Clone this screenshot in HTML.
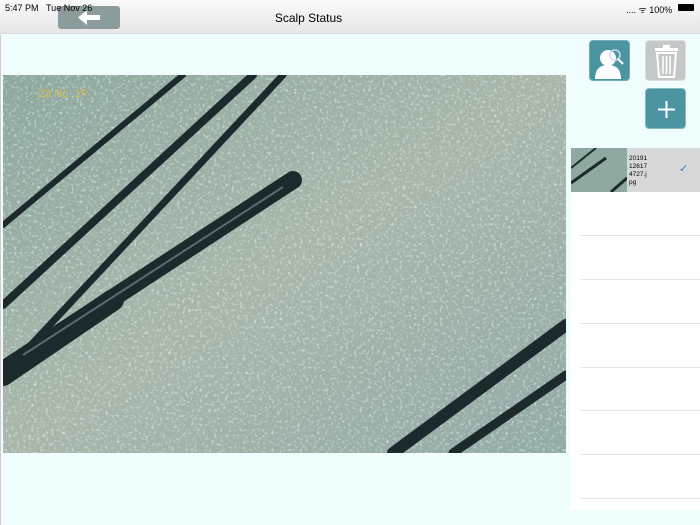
<!DOCTYPE html>
<html><head><style>
*{margin:0;padding:0;box-sizing:border-box}
body{width:700px;height:525px;overflow:hidden;background:#f0fdfd;font-family:"Liberation Sans",sans-serif;position:relative}
.bar{position:absolute;left:0;top:0;width:700px;height:34px;background:linear-gradient(#fafafa,#e6e6e6);border-bottom:1px solid #d8d8d8}
.t{position:absolute;font-size:9px;color:#000;top:3px;z-index:5}
.title{position:absolute;top:11px;left:0;width:617px;text-align:center;font-size:12px}
.back{position:absolute;left:58px;top:6px;width:62px;height:23px;background:#8c9c9c;border-radius:3px}
.btn{position:absolute;width:41px;height:41px;border-radius:4px}
.list{position:absolute;left:571px;top:148px;width:129px;height:362px;background:#fff}
.sep{position:absolute;left:10px;right:0;height:1px;background:#e4e4e4}
</style></head><body>
<div class="bar"></div>
<div class="back"><svg width="62" height="23"><path d="M20 11.5 L29 4 V9 H42 V14 H29 V19 Z" fill="#fff"/></svg></div>
<div class="t" style="left:5px">5:47 PM&nbsp;&nbsp;&nbsp;Tue Nov 26</div>
<div class="t" style="left:626px;font-size:9px">.... ᯤ 100%</div>
<div style="position:absolute;left:678px;top:4px;width:16px;height:7px;background:#000;border-radius:1px"></div>
<div class="title">Scalp Status</div>
<div style="position:absolute;left:0;top:35px;width:1px;height:490px;background:#ccc"></div>
<svg style="position:absolute;left:3px;top:75px" width="563" height="378">
<defs><linearGradient id="g" x1="0" y1="0" x2="1" y2="1"><stop offset="0" stop-color="#8ea89f"/><stop offset=".5" stop-color="#a9b7aa"/><stop offset="1" stop-color="#93aaa6"/></linearGradient>
<filter id="n"><feTurbulence type="fractalNoise" baseFrequency="0.35" numOctaves="2" seed="3"/><feColorMatrix values="0 0 0 0 0.8  0 0 0 0 1  0 0 0 0 1  0 0 0 3 -1.6"/></filter></defs>
<rect width="563" height="378" fill="url(#g)"/>
<rect width="563" height="378" filter="url(#n)" opacity=".6"/>
<g stroke="#1c2a2e" stroke-linecap="round">
<line x1="0" y1="150" x2="180" y2="0" stroke-width="6"/>
<line x1="0" y1="230" x2="250" y2="0" stroke-width="8"/>
<line x1="0" y1="300" x2="280" y2="0" stroke-width="7"/>
<line x1="0" y1="295" x2="290" y2="105" stroke-width="18"/>
<line x1="0" y1="300" x2="110" y2="225" stroke-width="22"/>
<line x1="390" y1="378" x2="563" y2="250" stroke-width="12"/>
<line x1="450" y1="378" x2="563" y2="300" stroke-width="9"/>
</g>
<line x1="20" y1="280" x2="280" y2="112" stroke="#6f8a90" stroke-width="2" opacity=".7"/>
<text x="36" y="22" fill="#d8c040" font-size="11">23 No. 1F</text>
</svg>
<div class="btn" style="left:589px;top:40px;background:#4b95a3;border:1px solid #7ab"><svg width="41" height="41"><circle cx="18" cy="17" r="8" fill="#fff"/><path d="M5 38 Q5 24 18 24 Q31 24 31 38Z" fill="#fff"/><circle cx="25" cy="14" r="5" fill="none" stroke="#cde" stroke-width="1.5"/><line x1="28" y1="18" x2="33" y2="23" stroke="#fff" stroke-width="2"/></svg></div>
<div class="btn" style="left:645px;top:40px;background:#c4c8c8;border:1px solid #ddd"><svg width="41" height="41"><rect x="9" y="7" width="23" height="3" fill="#fff"/><rect x="17" y="4" width="7" height="3" fill="#fff"/><path d="M11 12 H30 L28 36 H13Z" fill="none" stroke="#fff" stroke-width="2"/><path d="M17 15V33M20.5 15V33M24 15V33" stroke="#fff" stroke-width="1.5"/></svg></div>
<div class="btn" style="left:645px;top:88px;background:#4b95a3;border:1px solid #8bb"><svg width="41" height="41"><path d="M20.5 12V29M12 20.5H29" stroke="#fff" stroke-width="2"/></svg></div>
<div class="list">
<div style="position:absolute;left:0;top:0;width:129px;height:44px;background:#d8d8d8"></div>
<svg style="position:absolute;left:0;top:0" width="56" height="44"><rect width="56" height="44" fill="#8fa8a0"/><g stroke="#1c2a2e"><line x1="0" y1="20" x2="25" y2="0" stroke-width="2"/><line x1="0" y1="35" x2="35" y2="10" stroke-width="3"/><line x1="40" y1="44" x2="56" y2="30" stroke-width="3"/></g></svg>
<div style="position:absolute;left:58px;top:7px;font-size:6.5px;line-height:8px">20191<br>12617<br>4727.j<br>pg</div>
<div style="position:absolute;left:108px;top:14px;color:#1a7ff0;font-size:11px">✓</div>
<div class="sep" style="top:87px"></div><div class="sep" style="top:131px"></div><div class="sep" style="top:175px"></div><div class="sep" style="top:219px"></div><div class="sep" style="top:262px"></div><div class="sep" style="top:306px"></div><div class="sep" style="top:350px"></div>
</div>
</body></html>
